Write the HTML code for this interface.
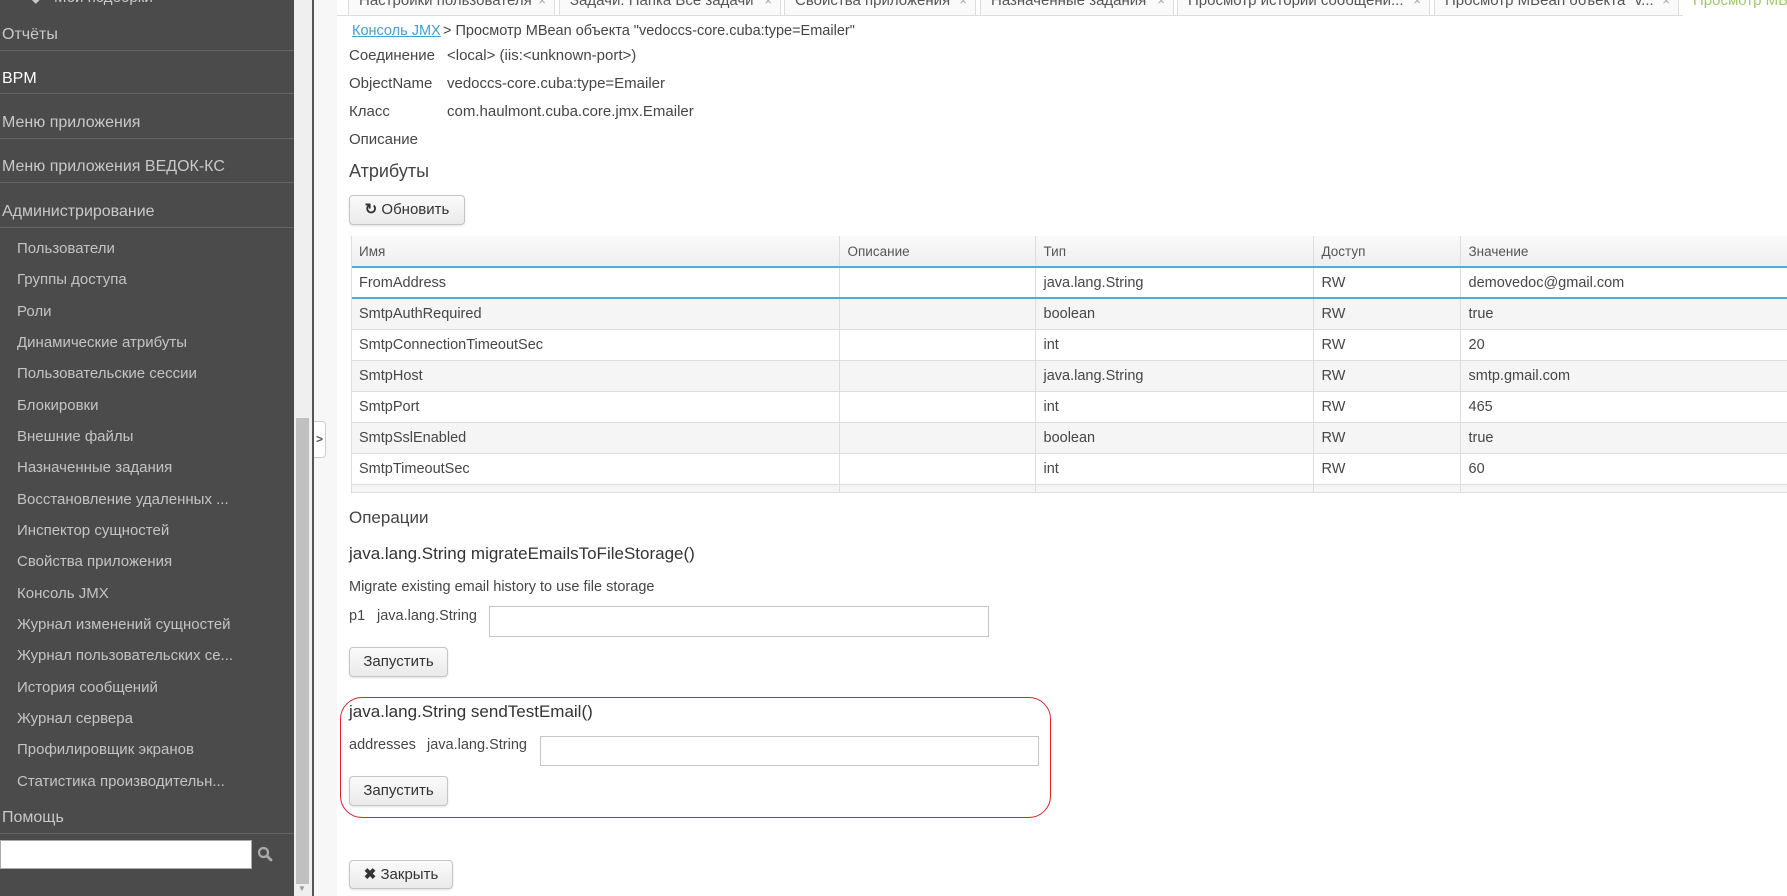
<!DOCTYPE html>
<html><head><meta charset="utf-8"><style>
*{box-sizing:border-box;margin:0;padding:0}
body{width:1787px;height:896px;overflow:hidden;background:#fff;font-family:"Liberation Sans",sans-serif;position:relative;color:#444}
.a{position:absolute;white-space:nowrap}
#sb{position:absolute;left:0;top:0;width:294px;height:896px;background:#4b4b4b;color:#c9c9c9;font-size:16px}
.ln{position:absolute;left:0;width:294px;height:1px;background:#666}
.sub{position:absolute;left:17px;font-size:15px;color:#c4c4c4;white-space:nowrap}
.tab{position:absolute;top:-8px;height:24px;border:1px solid #ddd;border-top:none;background:#fafafa;font-size:15px;color:#555;padding:0 10px;white-space:nowrap;overflow:hidden;line-height:18px}
.tab span{position:absolute;right:8px;color:#aaa;font-size:13px}
.lbl{font-size:15px;color:#464646}
.btn{position:absolute;border:1px solid #c5c5c5;border-radius:4px;background:linear-gradient(#fafafa,#eaeaea);box-shadow:0 1px 2px rgba(0,0,0,.12);font-size:15px;color:#333;text-align:center;white-space:nowrap}
table{position:absolute;left:351px;top:236px;width:1440px;border-collapse:collapse;font-size:14.5px;color:#464646}
td{border-right:1px solid #ddd;border-bottom:1px solid #ddd;height:31px;padding-left:8px;white-space:nowrap}
tr.h td{height:31px;background:linear-gradient(#fafafa,#efefef);font-size:13.5px;color:#555;border-bottom:1px solid #d2d2d2}
tr.g td{background:#f5f5f5}
tr.s td{border-top:2px solid #4ab0da;border-bottom:2px solid #4ab0da}
.inp{position:absolute;border:1px solid #c5c5c5;background:#fff}
</style></head><body>
<div id="sb">
<div class="a" style="left:30px;top:-12px;font-size:15px">◆ &nbsp;&nbsp;Мои подборки</div>
<div class="a" style="left:2px;top:26px">Отчёты</div><div class="ln" style="top:50px"></div>
<div class="a" style="left:2px;top:70px;color:#fff">BPM</div><div class="ln" style="top:93px"></div>
<div class="a" style="left:2px;top:114px">Меню приложения</div><div class="ln" style="top:138px"></div>
<div class="a" style="left:2px;top:158px">Меню приложения ВЕДОК-КС</div><div class="ln" style="top:182px"></div>
<div class="a" style="left:2px;top:203px">Администрирование</div><div class="ln" style="top:227px"></div>
<div class="sub" style="top:240px">Пользователи</div>
<div class="sub" style="top:271px">Группы доступа</div>
<div class="sub" style="top:303px">Роли</div>
<div class="sub" style="top:334px">Динамические атрибуты</div>
<div class="sub" style="top:365px">Пользовательские сессии</div>
<div class="sub" style="top:397px">Блокировки</div>
<div class="sub" style="top:428px">Внешние файлы</div>
<div class="sub" style="top:459px">Назначенные задания</div>
<div class="sub" style="top:491px">Восстановление удаленных ...</div>
<div class="sub" style="top:522px">Инспектор сущностей</div>
<div class="sub" style="top:553px">Свойства приложения</div>
<div class="sub" style="top:585px">Консоль JMX</div>
<div class="sub" style="top:616px">Журнал изменений сущностей</div>
<div class="sub" style="top:647px">Журнал пользовательских се...</div>
<div class="sub" style="top:679px">История сообщений</div>
<div class="sub" style="top:710px">Журнал сервера</div>
<div class="sub" style="top:741px">Профилировщик экранов</div>
<div class="sub" style="top:773px">Статистика производительн...</div>
<div class="a" style="left:2px;top:809px">Помощь</div><div class="ln" style="top:833px"></div>
<div style="position:absolute;left:0;top:840px;width:252px;height:29px;background:#fff;border:1px solid #aaa"></div>
<svg style="position:absolute;left:257px;top:846px" width="16" height="16" viewBox="0 0 16 16"><circle cx="6.5" cy="6.5" r="4.5" fill="none" stroke="#aaa" stroke-width="2.2"/><line x1="10" y1="10" x2="14" y2="14" stroke="#aaa" stroke-width="2.8" stroke-linecap="round"/></svg>
</div>
<div style="position:absolute;left:294px;top:0;width:18px;height:896px;background:#efefef"></div>
<div style="position:absolute;left:296px;top:418px;width:13px;height:466px;background:#c0c0c0"></div>
<div class="a" style="left:298px;top:884px;font-size:8px;color:#999">▼</div>
<div style="position:absolute;left:312px;top:0;width:2px;height:896px;background:#555"></div>
<div style="position:absolute;left:314px;top:0;width:23px;height:896px;background:#f7f7f7"></div>
<div style="position:absolute;left:314px;top:421px;width:12px;height:37px;background:#fff;border:1px solid #ccc;border-left:none;border-radius:0 4px 4px 0;font-size:12px;color:#555;line-height:35px;text-align:center;font-weight:bold">&gt;</div>
<div style="position:absolute;left:337px;top:15px;width:1450px;height:1px;background:#ddd"></div>
<div class="tab" style="left:348px;width:207px">Настройки пользователя<span>×</span></div>
<div class="tab" style="left:559px;width:222px">Задачи: Папка Все задачи<span>×</span></div>
<div class="tab" style="left:784px;width:192px">Свойства приложения<span>×</span></div>
<div class="tab" style="left:980px;width:194px">Назначенные задания<span>×</span></div>
<div class="tab" style="left:1177px;width:253px">Просмотр истории сообщени...<span>×</span></div>
<div class="tab" style="left:1434px;width:245px">Просмотр MBean объекта "v...<span>×</span></div>
<div class="tab" style="left:1683px;width:110px;background:#fff;border:none;color:#9ccc65">Просмотр MBean</div>
<div class="a" style="left:352px;top:23px;font-size:14.5px;color:#3ba3d4;text-decoration:underline">Консоль JMX</div>
<div class="a" style="left:443px;top:23px;font-size:14.5px;color:#444">&gt; Просмотр MBean объекта "vedoccs-core.cuba:type=Emailer"</div>
<div class="a lbl" style="left:349px;top:47px">Соединение</div><div class="a lbl" style="left:447px;top:47px">&lt;local&gt; (iis:&lt;unknown-port&gt;)</div>
<div class="a lbl" style="left:349px;top:75px">ObjectName</div><div class="a lbl" style="left:447px;top:75px">vedoccs-core.cuba:type=Emailer</div>
<div class="a lbl" style="left:349px;top:103px">Класс</div><div class="a lbl" style="left:447px;top:103px">com.haulmont.cuba.core.jmx.Emailer</div>
<div class="a lbl" style="left:349px;top:131px">Описание</div>
<div class="a" style="left:349px;top:161px;font-size:18px;color:#444">Атрибуты</div>
<div class="btn" style="left:349px;top:195px;width:116px;height:30px;line-height:28px"><b>↻</b> Обновить</div>
<table>
<tr class="h"><td style="width:488px">Имя</td><td style="width:196px">Описание</td><td style="width:278px">Тип</td><td style="width:147px">Доступ</td><td>Значение</td></tr>
<tr class="s"><td>FromAddress</td><td></td><td>java.lang.String</td><td>RW</td><td>demovedoc@gmail.com</td></tr>
<tr class="g"><td>SmtpAuthRequired</td><td></td><td>boolean</td><td>RW</td><td>true</td></tr>
<tr><td>SmtpConnectionTimeoutSec</td><td></td><td>int</td><td>RW</td><td>20</td></tr>
<tr class="g"><td>SmtpHost</td><td></td><td>java.lang.String</td><td>RW</td><td>smtp.gmail.com</td></tr>
<tr><td>SmtpPort</td><td></td><td>int</td><td>RW</td><td>465</td></tr>
<tr class="g"><td>SmtpSslEnabled</td><td></td><td>boolean</td><td>RW</td><td>true</td></tr>
<tr><td>SmtpTimeoutSec</td><td></td><td>int</td><td>RW</td><td>60</td></tr>
<tr class="g"><td style="height:8px"></td><td style="height:8px"></td><td style="height:8px"></td><td style="height:8px"></td><td style="height:8px"></td></tr>
</table>
<div style="position:absolute;left:351px;top:236px;width:1px;height:256px;background:#ddd"></div>
<div class="a" style="left:349px;top:508px;font-size:17px;color:#444">Операции</div>
<div class="a" style="left:349px;top:544px;font-size:17px;color:#333">java.lang.String migrateEmailsToFileStorage()</div>
<div class="a lbl" style="left:349px;top:579px;font-size:14.5px">Migrate existing email history to use file storage</div>
<div class="a lbl" style="left:349px;top:608px;font-size:14.5px">p1</div><div class="a lbl" style="left:377px;top:608px;font-size:14.5px">java.lang.String</div>
<div class="inp" style="left:489px;top:606px;width:500px;height:31px"></div>
<div class="btn" style="left:349px;top:647px;width:99px;height:30px;line-height:28px">Запустить</div>
<div style="position:absolute;left:340px;top:697px;width:711px;height:121px;border:1px solid #e2212a;border-radius:22px"></div>
<div class="a" style="left:349px;top:702px;font-size:17px;color:#333">java.lang.String sendTestEmail()</div>
<div class="a lbl" style="left:349px;top:737px;font-size:14.5px">addresses</div><div class="a lbl" style="left:427px;top:737px;font-size:14.5px">java.lang.String</div>
<div class="inp" style="left:540px;top:736px;width:499px;height:30px"></div>
<div class="btn" style="left:349px;top:776px;width:99px;height:30px;line-height:28px">Запустить</div>
<div class="btn" style="left:349px;top:860px;width:104px;height:29px;line-height:27px"><b>✖</b> Закрыть</div>
</body></html>
